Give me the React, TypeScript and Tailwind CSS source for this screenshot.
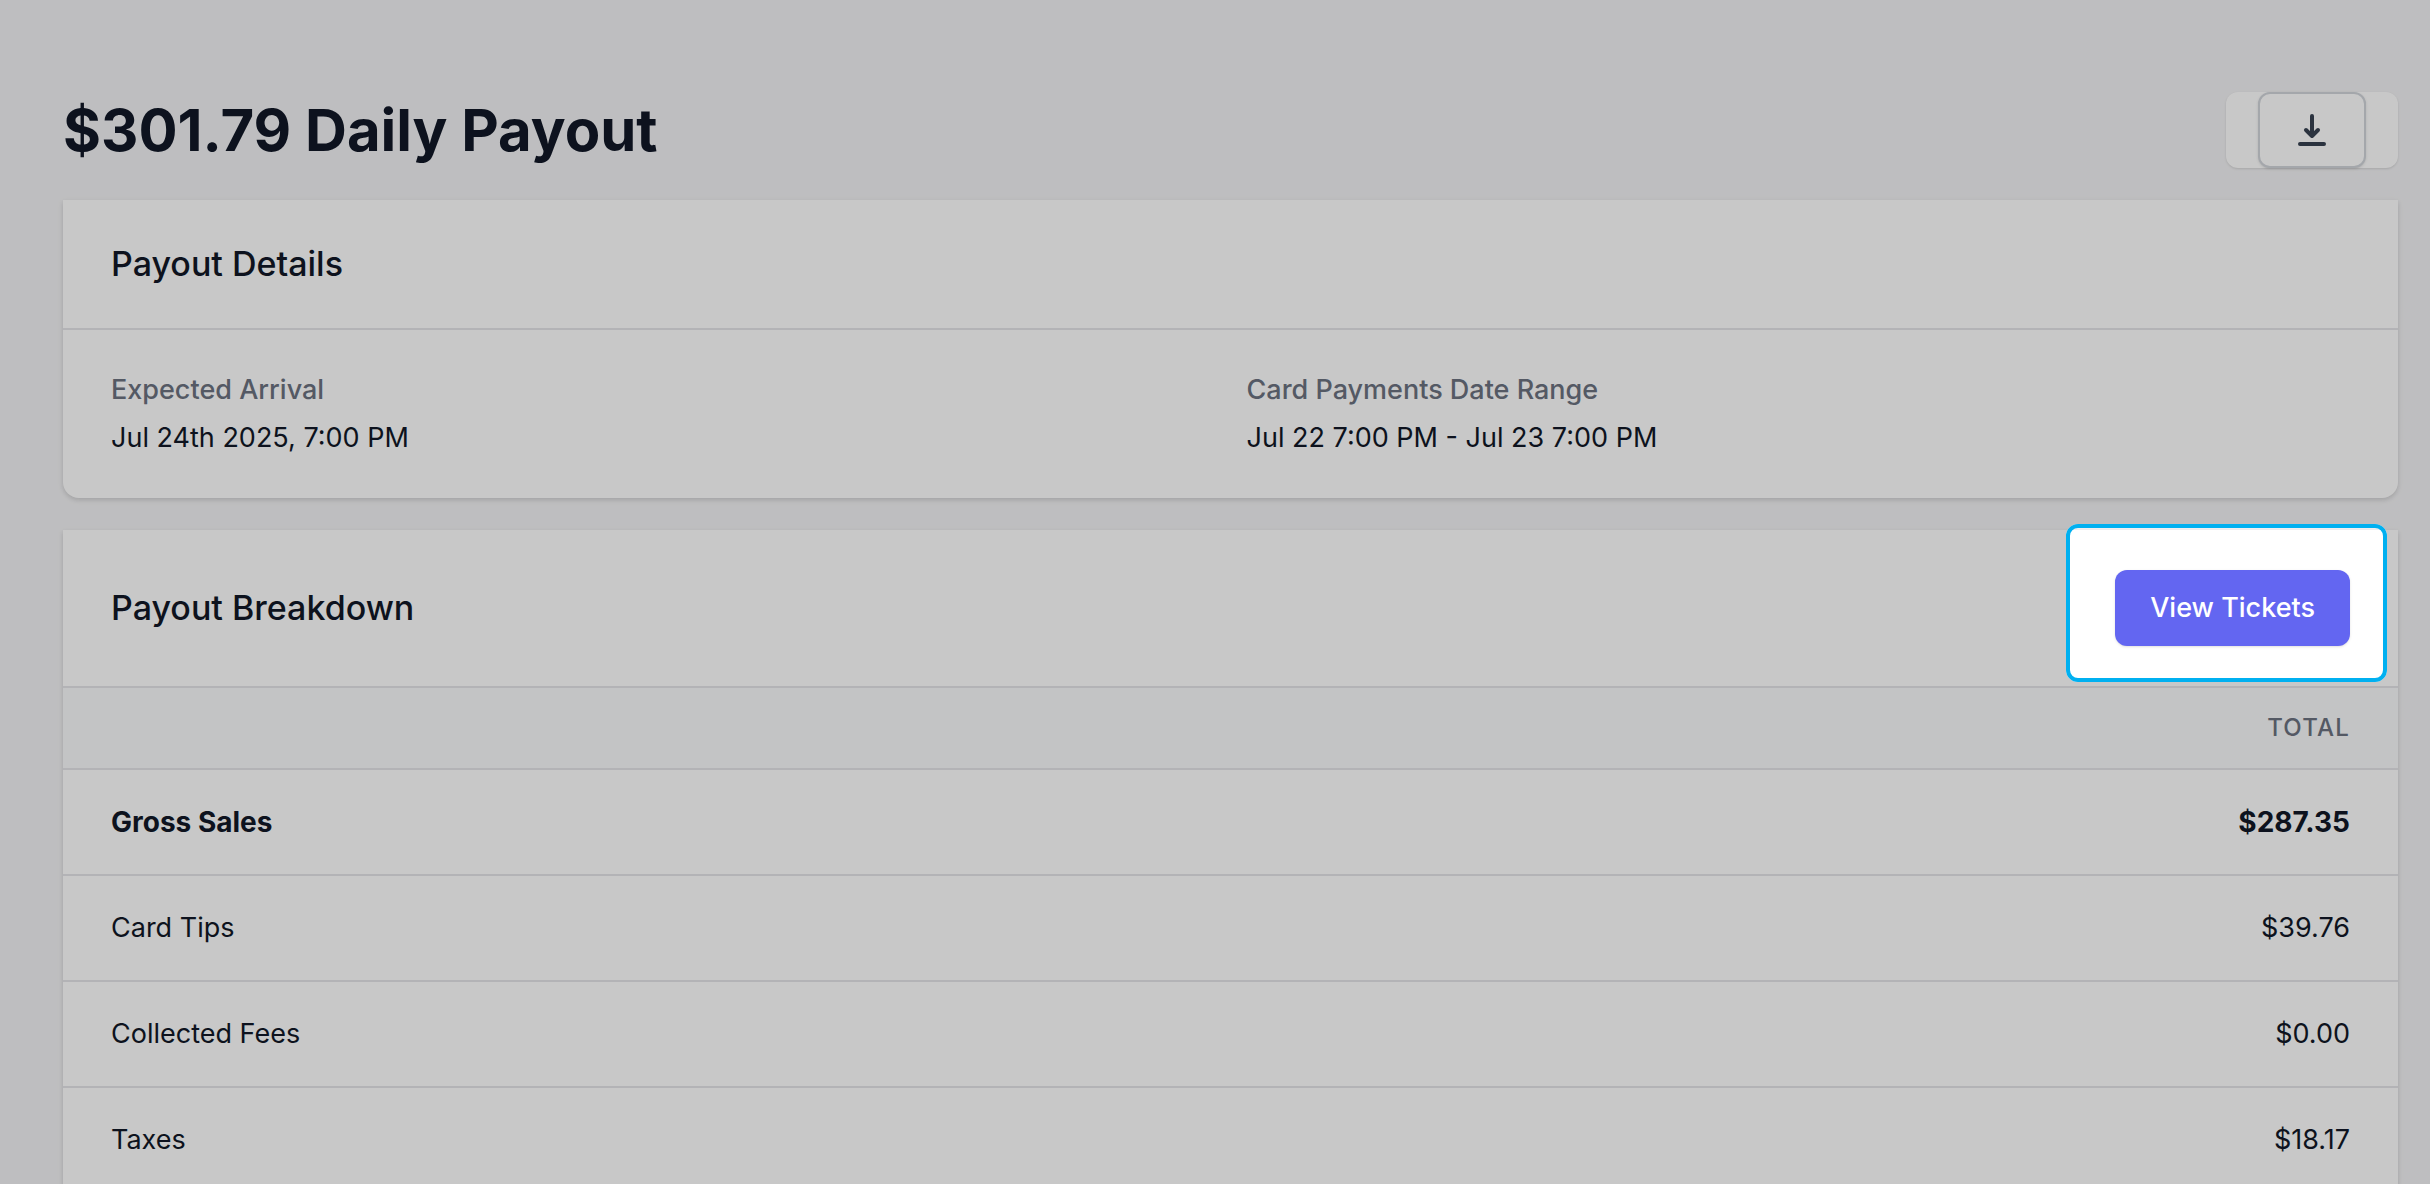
import clsx from "clsx";

type BreakdownRow = {
  label: string;
  total: string;
  bold?: boolean;
};

const details = [
  { label: "Expected Arrival", value: "Jul 24th 2025, 7:00 PM" },
  {
    label: "Card Payments Date Range",
    value: "Jul 22 7:00 PM - Jul 23 7:00 PM",
  },
];

const rows: BreakdownRow[] = [
  { label: "Gross Sales", total: "$287.35", bold: true },
  { label: "Card Tips", total: "$39.76" },
  { label: "Collected Fees", total: "$0.00" },
  { label: "Taxes", total: "$18.17" },
];

function DownloadIcon() {
  return (
    <svg
      className="size-10"
      viewBox="0 0 40 40"
      fill="none"
      stroke="currentColor"
      strokeWidth="4"
      strokeLinecap="round"
      strokeLinejoin="round"
      aria-hidden="true"
    >
      <path d="M20 6v19M14 20l6 6 6-6M8 34h24" />
    </svg>
  );
}

// Outlines its parent and dims the rest of the page with one large shadow
function Spotlight() {
  return (
    <div className="pointer-events-none absolute -top-[46px] -right-[37px] -bottom-9 -left-[49px] z-50 rounded-xl border-4 border-[#00b0f0] shadow-[0_0_0_3000px_rgba(0,0,0,0.215)]" />
  );
}

export default function App() {
  return (
    <div className="h-screen overflow-hidden bg-[#f3f3f5] pt-[92px] pr-8 pl-[63px] font-['Inter',sans-serif] text-[27px] leading-10 text-[#111827]">
      <header className="flex items-center justify-between">
        <h1 className="text-[58px] leading-[76px] font-bold">
          $301.79 Daily Payout
        </h1>
        <div className="rounded-xl bg-white px-8 shadow-sm">
          <button
            type="button"
            aria-label="Download"
            className="flex h-[76px] w-[108px] items-center justify-center rounded-xl border-2 border-[#d1d5db] bg-white text-[#374151] shadow-sm"
          >
            <DownloadIcon />
          </button>
        </div>
      </header>

      <section className="mt-8 rounded-b-2xl bg-white shadow-[0_2px_6px_rgba(0,0,0,0.1),0_2px_4px_rgba(0,0,0,0.06)]">
        <div className="border-b-2 border-[#e4e4e9] px-12 py-10">
          <h2 className="text-[34px] leading-12 font-medium">Payout Details</h2>
        </div>
        <dl className="grid grid-cols-2 gap-8 px-12 py-10">
          {details.map((item) => (
            <div key={item.label}>
              <dt className="font-medium text-[#6b7280]">{item.label}</dt>
              <dd className="mt-2">{item.value}</dd>
            </div>
          ))}
        </dl>
      </section>

      <section className="mt-8 bg-white shadow-[0_2px_6px_rgba(0,0,0,0.1),0_2px_4px_rgba(0,0,0,0.06)]">
        <div className="flex items-center justify-between px-12 py-10">
          <h2 className="text-[34px] leading-12 font-medium">
            Payout Breakdown
          </h2>
          <div className="relative">
            <button
              type="button"
              className="block rounded-xl bg-[#6366f1] px-[35px] py-[18px] font-medium text-white shadow-sm"
            >
              View Tickets
            </button>
            <Spotlight />
          </div>
        </div>
        <table className="w-full">
          <thead className="border-t-2 border-[#e4e4e9] bg-[#f9fafb] text-2xl leading-8 text-[#6b7280]">
            <tr>
              <th scope="col" className="px-12 py-6" aria-label="Item" />
              <th
                scope="col"
                className="px-12 py-6 text-right font-medium tracking-wider uppercase"
              >
                Total
              </th>
            </tr>
          </thead>
          <tbody>
            {rows.map((row) => (
              <tr
                key={row.label}
                className={clsx(
                  "border-t-2 border-[#e4e4e9]",
                  row.bold && "text-[28px] leading-10 font-bold"
                )}
              >
                <td className="px-12 py-8">{row.label}</td>
                <td className="px-12 py-8 text-right">{row.total}</td>
              </tr>
            ))}
          </tbody>
        </table>
      </section>
    </div>
  );
}
